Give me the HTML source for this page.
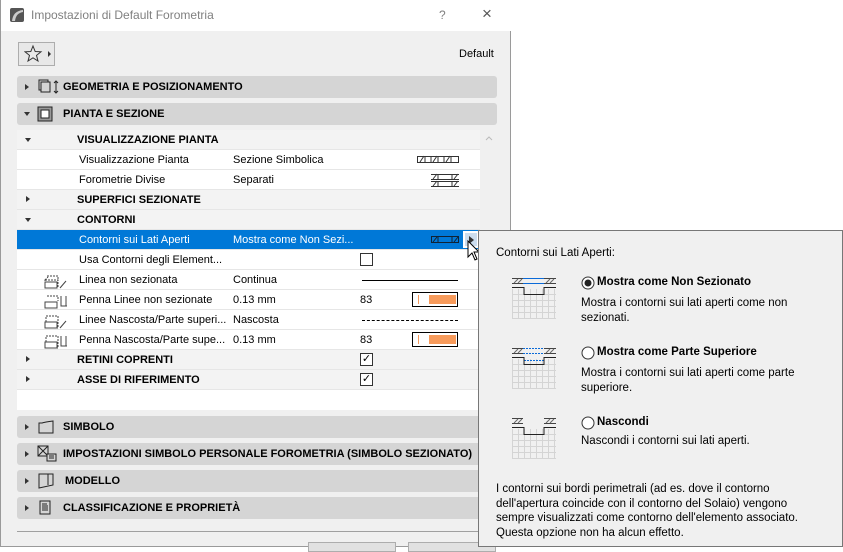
<!DOCTYPE html>
<html><head><meta charset="utf-8"><style>
*{margin:0;padding:0;box-sizing:border-box}
body{width:843px;height:547px;overflow:hidden;background:#fff;font-family:"Liberation Sans",sans-serif;font-size:11px;color:#000;position:relative}
.dlg{position:absolute;left:0;top:0;width:511px;height:547px;background:#f0f0f0;border:1px solid #9a9a9a;border-top:none}
.title{position:absolute;left:0;top:0;width:510px;height:31px;background:#fff;color:#808080;font-size:12px}
.abs{position:absolute}
.sec{position:absolute;left:16px;width:480px;height:22px;background:#d5d5d5;border-radius:3px;font-weight:bold;font-size:11px}
.sec .t{position:absolute;top:5px}
.tri{position:absolute;width:0;height:0;border-top:3.5px solid transparent;border-bottom:3.5px solid transparent;border-left:4px solid #333}
.trid{position:absolute;width:0;height:0;border-left:3.5px solid transparent;border-right:3.5px solid transparent;border-top:4px solid #333}
.tree{position:absolute;left:16px;top:130px;width:463px;height:280px;background:#fff}
.row{position:absolute;left:0;width:463px;height:20px;border-bottom:1px solid #e6e6e6}
.row span{position:absolute;top:4px}
.g{background:#f3f3f3;font-weight:bold}
.sel{background:#0078d7;color:#fff}
.cb{position:absolute;width:13px;height:13px;border:1px solid #333;background:#fff}
.pen{position:absolute;width:46px;height:15px;border:1px solid #000;background:#fff}
.pen i{position:absolute;left:16px;top:2px;width:27px;height:9px;background:#f79a5a}
.pen b{position:absolute;left:5px;top:2px;width:1px;height:9px;background:#f79a5a}
.pop{position:absolute;left:478px;top:230px;width:365px;height:317px;background:#f0f0f0;border:1px solid #777;font-size:11.5px}
</style></head><body>
<div class="dlg">
 <div class="title">
  <svg class="abs" style="left:9px;top:8px" width="14" height="14"><rect width="14" height="14" rx="2" fill="#555"/><path d="M2 13 Q3 3 13 2 L13 4 Q6 5 5 13Z" fill="#ccc"/></svg>
  <span class="abs" style="left:30px;top:8px">Impostazioni di Default Forometria</span>
  <span class="abs" style="left:438px;top:8px">?</span>
  <span class="abs" style="left:481px;top:4px;font-size:17px;color:#555">×</span>
 </div>
 <div class="abs" style="left:17px;top:42px;width:37px;height:24px;border:1px solid #adadad;background:#e8e8e8"></div>
 <svg class="abs" style="left:23px;top:44px" width="30" height="20"><path d="M9 2 L11.2 7.5 L17 7.8 L12.5 11.4 L14 17 L9 13.8 L4 17 L5.5 11.4 L1 7.8 L6.8 7.5Z" fill="none" stroke="#333"/><path d="M24 7 L27 10 L24 13Z" fill="#333"/></svg>
 <span class="abs" style="left:458px;top:48px">Default</span>

 <div class="sec" style="top:76px"><div class="tri" style="left:8px;top:8px"></div>
  <svg class="abs" style="left:20px;top:3px" width="24" height="16"><rect x="2" y="1" width="9" height="10" fill="none" stroke="#222"/><rect x="4" y="3" width="9" height="10" fill="#d5d5d5" stroke="#222"/><path d="M19 2v12M17 4l2-2 2 2M17 12l2 2 2-2" stroke="#222" fill="none"/></svg>
  <span class="t" style="left:46px">GEOMETRIA E POSIZIONAMENTO</span></div>
 <div class="sec" style="top:103px"><div class="trid" style="left:7px;top:9px"></div>
  <svg class="abs" style="left:20px;top:3px" width="20" height="16"><rect x="1" y="1" width="14" height="14" fill="#999"/><rect x="4" y="4" width="8" height="8" fill="#fff" stroke="#222"/><rect x="1" y="1" width="14" height="14" fill="none" stroke="#222"/></svg>
  <span class="t" style="left:46px">PIANTA E SEZIONE</span></div>

 <div class="tree">
  <div class="row g" style="top:0;background:#f3f3f3"><div class="trid" style="left:8px;top:8px"></div><span style="left:60px">VISUALIZZAZIONE PIANTA</span></div>
  <div class="row" style="top:20px"><span style="left:62px">Visualizzazione Pianta</span><span style="left:216px">Sezione Simbolica</span>
   <svg class="abs" style="left:400px;top:5px" width="42" height="10"><rect x="0.5" y="1.5" width="41" height="6" fill="none" stroke="#333"/><path d="M8 1v7M14 1v7M21 1v7M27 1v7M34 1v7M3 7l4-6M16 7l4-6M29 7l4-6" stroke="#333"/></svg></div>
  <div class="row" style="top:40px"><span style="left:62px">Forometrie Divise</span><span style="left:216px">Separati</span>
   <svg class="abs" style="left:414px;top:3px" width="28" height="14"><path d="M0 1.5h28M0 6.5h28M0 8.5h28M0 13.5h28M7 1v5M21 1v5M7 8v6M21 8v6M2 6l4-5M23 6l4-5M2 13l4-5M23 13l4-5" stroke="#333" fill="none"/></svg></div>
  <div class="row g" style="top:60px"><div class="tri" style="left:9px;top:6px"></div><span style="left:60px">SUPERFICI SEZIONATE</span></div>
  <div class="row g" style="top:80px"><div class="trid" style="left:8px;top:8px"></div><span style="left:60px">CONTORNI</span></div>
  <div class="row sel" style="top:100px"><span style="left:62px">Contorni sui Lati Aperti</span><span style="left:216px">Mostra come Non Sezi...</span>
   <svg class="abs" style="left:414px;top:6px" width="28" height="8"><rect x="0.5" y="0.5" width="27" height="6" fill="none" stroke="#123"/><path d="M7 0v7M21 0v7M2 6l4-5M23 6l4-5" stroke="#123"/></svg>
   <div class="abs" style="left:446px;top:1px;width:16px;height:17px;border:2px solid #fff;background:#cde;"></div>
   <div class="tri" style="left:452px;top:6px;border-top-width:4px;border-bottom-width:4px;border-left-width:5px"></div></div>
  <div class="row" style="top:120px"><span style="left:62px">Usa Contorni degli Element...</span><div class="cb" style="left:343px;top:3px"></div></div>
  <div class="row" style="top:140px"><span style="left:62px">Linea non sezionata</span><span style="left:216px">Continua</span><div class="abs" style="left:345px;top:10px;width:96px;height:1px;background:#000"></div></div>
  <div class="row" style="top:160px"><span style="left:62px">Penna Linee non sezionate</span><span style="left:216px">0.13 mm</span><span style="left:343px">83</span><div class="pen" style="left:395px;top:2px"><b></b><i></i></div></div>
  <div class="row" style="top:180px"><span style="left:62px">Linee Nascosta/Parte superi...</span><span style="left:216px">Nascosta</span><div class="abs" style="left:345px;top:10px;width:96px;height:0;border-top:1px dashed #000"></div></div>
  <div class="row" style="top:200px"><span style="left:62px">Penna Nascosta/Parte supe...</span><span style="left:216px">0.13 mm</span><span style="left:343px">83</span><div class="pen" style="left:395px;top:2px"><b></b><i></i></div></div>
  <div class="row g" style="top:220px"><div class="tri" style="left:9px;top:6px"></div><span style="left:60px">RETINI COPRENTI</span><div class="cb" style="left:343px;top:3px;font-weight:normal;font-size:11px;line-height:11px;text-align:center">✓</div></div>
  <div class="row g" style="top:240px"><div class="tri" style="left:9px;top:6px"></div><span style="left:60px">ASSE DI RIFERIMENTO</span><div class="cb" style="left:343px;top:3px;font-weight:normal;font-size:11px;line-height:11px;text-align:center">✓</div></div>
  <svg class="abs" style="left:26px;top:142px" width="32" height="78" fill="none" stroke="#444" stroke-width="1">
   <path d="M4 4h11v3M2 8h13v7H2zM2 8l3-3" stroke-dasharray="2 1"/><rect x="2" y="10" width="12" height="6" fill="#fff"/><path d="M17 16l6-7"/>
   <rect x="2" y="30" width="12" height="6" fill="#fff"/><path d="M4 24h11v5" stroke-dasharray="2 1"/><path d="M18 24v10h6M23 24v10"/>
   <path d="M3 44h12v12H3z" stroke-dasharray="2 1"/><rect x="2" y="50" width="12" height="6" fill="#fff"/><path d="M17 56l6-7"/>
   <path d="M3 64h12v12H3z" stroke-dasharray="2 1"/><rect x="2" y="70" width="12" height="6" fill="#fff"/><path d="M18 64v10h6M23 64v10"/>
  </svg>
 </div>
 <div class="abs" style="left:479px;top:130px;width:17px;height:280px;background:#f0f0f0"></div>
 <svg class="abs" style="left:484px;top:135px" width="8" height="6"><path d="M1 5l3-3 3 3" stroke="#bbb" fill="none"/></svg>

 <div class="sec" style="top:416px"><div class="tri" style="left:8px;top:8px"></div><svg class="abs" style="left:21px;top:4px" width="20" height="14"><path d="M1 13V3h3Q7 2 15 1v12z" fill="none" stroke="#222"/><path d="M1 3h3" stroke="#222"/></svg><span class="t" style="left:46px">SIMBOLO</span></div>
 <div class="sec" style="top:443px"><div class="tri" style="left:8px;top:8px"></div><svg class="abs" style="left:20px;top:2px" width="22" height="18"><rect x="1" y="1" width="10" height="10" fill="none" stroke="#222"/><path d="M1 1l10 10M11 1L1 11" stroke="#222"/><rect x="10" y="9" width="9" height="7" fill="#d5d5d5" stroke="#222"/><path d="M12 11h5M12 13h5" stroke="#222"/></svg><span class="t" style="left:46px">IMPOSTAZIONI SIMBOLO PERSONALE FOROMETRIA (SIMBOLO SEZIONATO)</span></div>
 <div class="sec" style="top:470px"><div class="tri" style="left:8px;top:8px"></div><svg class="abs" style="left:21px;top:3px" width="20" height="16"><path d="M1 1h14v11L1 15zM10 1v11" fill="none" stroke="#222"/></svg><span class="t" style="left:48px">MODELLO</span></div>
 <div class="sec" style="top:497px"><div class="tri" style="left:8px;top:8px"></div><svg class="abs" style="left:22px;top:3px" width="14" height="16"><rect x="1" y="1" width="10" height="13" fill="none" stroke="#222"/><path d="M3 4h5M3 6h6M3 8h6M3 10h6" stroke="#222"/></svg><span class="t" style="left:46px">CLASSIFICAZIONE E PROPRIETÀ</span></div>
 <div class="abs" style="left:16px;top:531px;width:480px;height:1px;background:#a0a0a0"></div>
 <div class="abs" style="left:307px;top:542px;width:88px;height:10px;border:1px solid #adadad;background:#e1e1e1"></div>
 <div class="abs" style="left:407px;top:542px;width:88px;height:10px;border:1px solid #adadad;background:#e1e1e1"></div>
</div>
<svg class="abs" style="left:467px;top:240px" width="14" height="22"><path d="M1 1v16l4-4 3 7 2-1-3-7h5z" fill="#fff" stroke="#000"/></svg>

<div class="pop">
 <span class="abs" style="left:17px;top:16px">Contorni sui Lati Aperti:</span>
 <svg class="abs" style="left:32px;top:46px" width="48" height="200" stroke-width="1">
  <defs><path id="gd" d="M1.5 12v30M7.5 12v30M13.5 12v30M19.5 12v30M25.5 12v30M31.5 12v30M37.5 12v30M43.5 12v30M1 17.5h44M1 23.5h44M1 29.5h44M1 35.5h44M1 41.5h44" stroke="#d4d4d4"/></defs>
  <use href="#gd"/>
  <path d="M1 6.5h11M33 6.5h12M1 1.5h11M33 1.5h12" stroke="#444"/><path d="M3 6l4-4M7 6l4-4M35 6l4-4M39 6l4-4" stroke="#666"/>
  <path d="M12 1.5h21M12 6.5h21" stroke="#0a6ad8"/>
  <path d="M1 10.5h12v7h20v-7h12" fill="none" stroke="#222"/>
  <g transform="translate(0,70)"><use href="#gd"/>
  <path d="M1 6.5h11M33 6.5h12M1 1.5h11M33 1.5h12" stroke="#444"/><path d="M3 6l4-4M7 6l4-4M35 6l4-4M39 6l4-4" stroke="#666"/>
  <path d="M12 1.5h21M12 6.5h21M13 13.5h20" stroke="#0a6ad8" stroke-dasharray="2 1"/>
  <path d="M1 10.5h12v7h20v-7h12" fill="none" stroke="#222"/></g>
  <g transform="translate(0,140)"><use href="#gd"/>
  <path d="M1 6.5h11M33 6.5h12M1 1.5h11M33 1.5h12" stroke="#444"/><path d="M3 6l4-4M7 6l4-4M35 6l4-4M39 6l4-4" stroke="#666"/>
  <path d="M1 10.5h12v7h20v-7h12" fill="none" stroke="#222"/></g>
 </svg>
 <svg class="abs" style="left:102px;top:45px" width="14" height="14"><circle cx="7" cy="7" r="6" fill="#fff" stroke="#333"/><circle cx="7" cy="7" r="3.5" fill="#222"/></svg>
 <b class="abs" style="left:118px;top:45px">Mostra come Non Sezionato</b>
 <span class="abs" style="left:102px;top:65px;line-height:15px">Mostra i contorni sui lati aperti come non<br>sezionati.</span>
 <svg class="abs" style="left:102px;top:115px" width="14" height="14"><circle cx="7" cy="7" r="6" fill="#fff" stroke="#333"/></svg>
 <b class="abs" style="left:118px;top:115px">Mostra come Parte Superiore</b>
 <span class="abs" style="left:102px;top:135px;line-height:15px">Mostra i contorni sui lati aperti come parte<br>superiore.</span>
 <svg class="abs" style="left:102px;top:185px" width="14" height="14"><circle cx="7" cy="7" r="6" fill="#fff" stroke="#333"/></svg>
 <b class="abs" style="left:118px;top:185px">Nascondi</b>
 <span class="abs" style="left:102px;top:204px">Nascondi i contorni sui lati aperti.</span>
 <span class="abs" style="left:17px;top:251px;line-height:14.5px;white-space:nowrap">I contorni sui bordi perimetrali (ad es. dove il contorno<br>dell'apertura coincide con il contorno del Solaio) vengono<br>sempre visualizzati come contorno dell'elemento associato.<br>Questa opzione non ha alcun effetto.</span>
</div>
</body></html>
